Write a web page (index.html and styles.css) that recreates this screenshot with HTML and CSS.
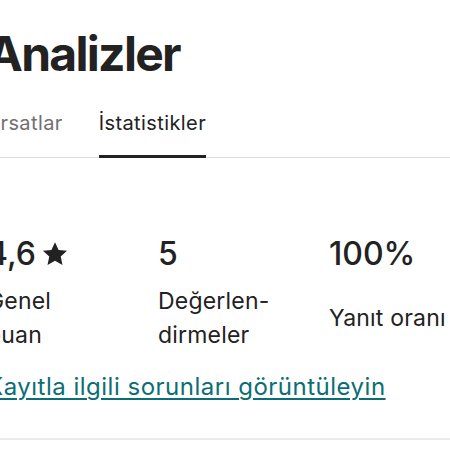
FILE: index.html
```html
<!DOCTYPE html>
<html lang="tr">
<head>
<meta charset="utf-8">
<title>Analizler</title>
<link rel="stylesheet" href="styles.css">
</head>
<body>
<div class="page">
  <h1 class="title">Analizler</h1>
  <nav class="tabs">
    <span class="tab">Fırsatlar</span>
    <span class="tab tab-active">İstatistikler</span>
  </nav>
  <section class="stats">
    <div class="value">4,6<svg class="star" viewBox="0 0 24 24" aria-hidden="true"><path d="M12 1.2l3.3 7.1 7.8.8-5.8 5.3 1.6 7.7L12 18.2l-6.9 3.9 1.6-7.7L.9 9.1l7.8-.8z"/></svg></div>
    <div class="value">5</div>
    <div class="value">100%</div>
    <div class="label">Genel<br>puan</div>
    <div class="label">Değerlen-<br>dirmeler</div>
    <div class="label">Yanıt oranı</div>
  </section>
  <a class="link" href="#">Kayıtla ilgili sorunları görüntüleyin</a>
  <div class="divider"></div>
</div>
</body>
</html>
```
FILE: styles.css
```css
html, body {
  margin: 0;
  padding: 0;
  background: #ffffff;
  overflow: hidden;
}
body {
  font-family: "Inter", "Liberation Sans", sans-serif;
  color: #222222;
}
.page {
  margin-left: -13px;
  width: 470px;
}
.title {
  margin: 0;
  padding-top: 26px;
  font-size: 48px;
  line-height: 56px;
  font-weight: 700;
  letter-spacing: -1.7px;
}
.tabs {
  display: flex;
  gap: 36px;
  margin-top: 29px;
  padding-left: 0;
  border-bottom: 1px solid #dcdcdc;
}
.tab {
  font-size: 20px;
  line-height: 25px;
  font-weight: 400;
  letter-spacing: 0.4px;
  color: #717171;
  padding-bottom: 19px;
  border-bottom: 3px solid transparent;
  margin-bottom: -1px;
}
.tab:first-child {
  margin-left: -4px;
}
.tab-active {
  color: #222222;
  border-bottom-color: #222222;
}
.stats {
  display: grid;
  grid-template-columns: 171px 171px 1fr;
  row-gap: 10px;
  align-items: center;
  margin-top: 76px;
}
.value {
  font-size: 32px;
  line-height: 40px;
  font-weight: 500;
  display: flex;
  align-items: center;
  gap: 6px;
}
.star {
  width: 26px;
  height: 26px;
  fill: #222222;
}
.label {
  font-size: 23px;
  line-height: 34px;
  font-weight: 400;
  letter-spacing: 0.2px;
}
.link {
  display: block;
  margin-top: 20px;
  font-size: 24px;
  line-height: 30px;
  letter-spacing: 0.5px;
  color: #0a6e74;
  text-decoration: underline;
  text-underline-offset: 3px;
  text-decoration-thickness: 1.5px;
}
.divider {
  margin-top: 36px;
  height: 2px;
  background: #ebebeb;
}
```
